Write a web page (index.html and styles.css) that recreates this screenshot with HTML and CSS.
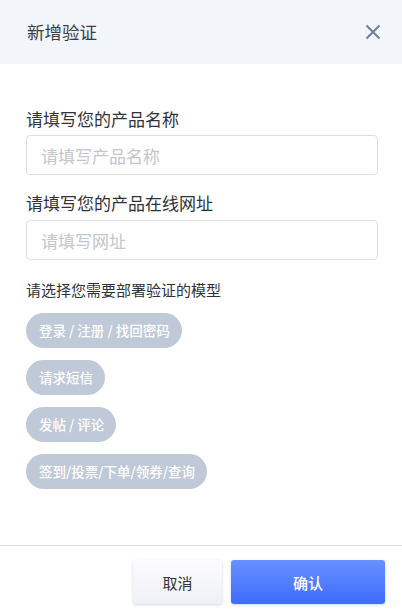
FILE: index.html
```html
<!DOCTYPE html>
<html lang="zh">
<head>
<meta charset="utf-8">
<link rel="stylesheet" href="styles.css">
</head>
<body>
<div class="dialog">
  <header class="dlg-header">
    <span class="dlg-title">新增验证</span>
    <button class="dlg-close" aria-label="关闭">
      <svg width="16" height="16" viewBox="0 0 16 16"><path d="M1.5 1.5 L14.5 14.5 M14.5 1.5 L1.5 14.5" stroke="#6f7d9b" stroke-width="2" fill="none"/></svg>
    </button>
  </header>
  <main class="dlg-body">
    <label class="field-label">请填写您的产品名称</label>
    <input class="field-input" placeholder="请填写产品名称">
    <label class="field-label second">请填写您的产品在线网址</label>
    <input class="field-input" placeholder="请填写网址">
    <div class="section-label">请选择您需要部署验证的模型</div>
    <div class="chips">
      <span class="chip">登录 / 注册 / 找回密码</span>
      <span class="chip">请求短信</span>
      <span class="chip">发帖 / 评论</span>
      <span class="chip">签到/投票/下单/领券/查询</span>
    </div>
  </main>
  <footer class="dlg-footer">
    <button class="btn btn-cancel">取消</button>
    <button class="btn btn-ok">确认</button>
  </footer>
</div>
</body>
</html>
```
FILE: styles.css
```css
* { box-sizing: border-box; }
html, body { margin: 0; padding: 0; background: #fff; }
body { font-family: "Noto Sans CJK SC", "Noto Sans", sans-serif; color: #333; }
.dialog { width: 402px; height: 610px; display: flex; flex-direction: column; }
.dlg-header {
  height: 64px; flex: none; background: #f2f5fa;
  display: flex; align-items: center; justify-content: space-between;
  padding: 0 21px 0 27px;
}
.dlg-title { font-size: 17.5px; color: #3a3d45; line-height: 24px; }
.dlg-close { border: 0; background: none; padding: 0; width: 16px; height: 16px; display: flex; }
.dlg-body { flex: 1; padding: 43px 24px 0 26px; display: flex; flex-direction: column; align-items: flex-start; }
.field-label { font-size: 17px; line-height: 24px; color: #2f3238; margin-bottom: 4px; }
.field-label.second { margin-top: 16px; margin-bottom: 5px; }
.field-input {
  width: 352px; height: 40px; border: 1px solid #dcdee3; border-radius: 4px;
  padding: 0 14px; font-family: inherit; font-size: 17px; color: #333; outline: none;
}
.field-input::placeholder { color: #c3c6cc; }
.section-label { margin-top: 20px; font-size: 15px; line-height: 20px; color: #2f3238; }
.chips { margin-top: 13px; display: flex; flex-direction: column; align-items: flex-start; gap: 12px; }
.chip {
  height: 35px; line-height: 35px; padding: 0 12px 0 13px; border-radius: 18px;
  background: #bfc9d7; color: #fff; font-size: 13.5px; font-weight: 500; white-space: nowrap;
}
.dlg-footer {
  flex: none; border-top: 1px solid #dfdfe6; padding: 14px 17px 6px;
  display: flex; justify-content: flex-end; gap: 9px;
}
.btn {
  height: 44px; border: 0; border-radius: 3px; font-family: inherit; font-size: 15px; cursor: pointer;
}
.btn-cancel {
  width: 89px; color: #333;
  background: linear-gradient(#fcfcfe, #eff0f6);
  box-shadow: 0 1px 3px rgba(80, 90, 130, 0.25);
}
.btn-ok {
  width: 154px; color: #fff; font-weight: 500;
  background: linear-gradient(#6890ff, #3d6cff);
  box-shadow: 0 1px 3px rgba(60, 100, 230, 0.25);
}
```
